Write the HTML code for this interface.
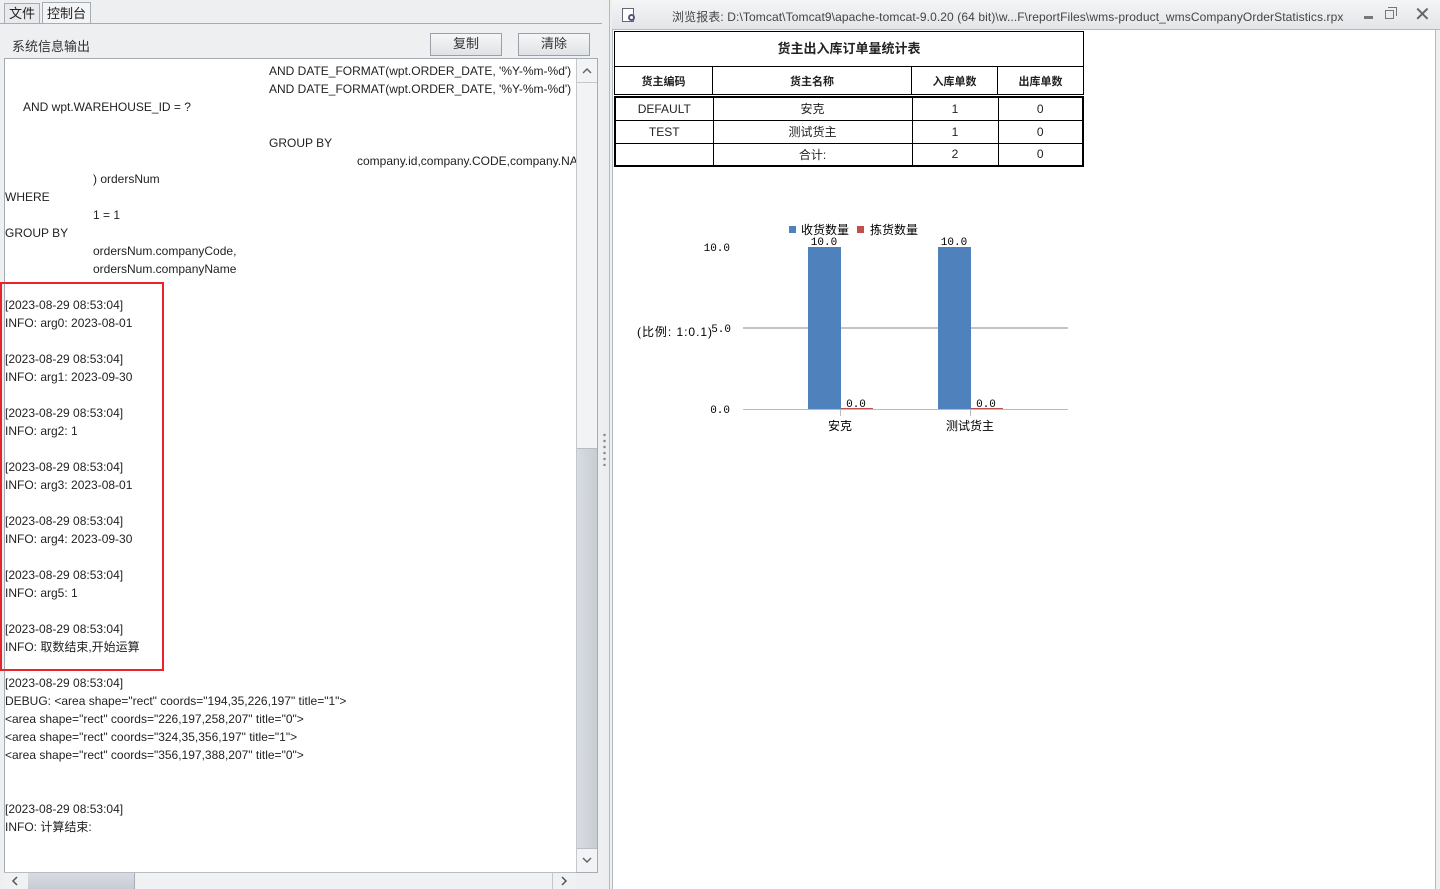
<!DOCTYPE html>
<html><head><meta charset="utf-8"><style>
*{margin:0;padding:0;box-sizing:border-box}
body{width:1440px;height:889px;background:#eeeff1;font-family:"Liberation Sans","Noto Sans CJK SC",sans-serif;font-size:12px;color:#222;position:relative;overflow:hidden}
.a{position:absolute;white-space:nowrap}
.ln{position:absolute;white-space:nowrap;line-height:18px;font-size:12px;color:#222;margin-top:1px}
.btn{position:absolute;border:1px solid #9aa0a8;background:linear-gradient(#f6f7f8,#dfe2e6);text-align:center;font-size:13px;line-height:20px;color:#333}
table{border-collapse:collapse}
</style></head><body>
<div class="a" style="left:4px;top:3px;width:36px;height:21px;border:1px solid #a6acb3;border-bottom:none;background:#e8eaed;font-size:13px;line-height:20px;text-align:center">文件</div>
<div class="a" style="left:42px;top:2px;width:49px;height:22px;border:1px solid #a6acb3;border-bottom:none;background:#f3f4f6;font-size:13px;line-height:21px;text-align:center">控制台</div>
<div class="a" style="left:0;top:23px;width:602px;height:1px;background:#a6acb3"></div>
<div class="a" style="left:12px;top:36px;font-size:13px;color:#333">系统信息输出</div>
<div class="btn" style="left:430px;top:33px;width:72px;height:23px">复制</div>
<div class="btn" style="left:518px;top:33px;width:72px;height:23px">清除</div>
<div class="a" style="left:4px;top:58px;width:594px;height:815px;background:#fff;border:1px solid #a6acb3"></div>
<div class="ln" style="left:269px;top:61px">AND DATE_FORMAT(wpt.ORDER_DATE, '%Y-%m-%d')</div>
<div class="ln" style="left:269px;top:79px">AND DATE_FORMAT(wpt.ORDER_DATE, '%Y-%m-%d')</div>
<div class="ln" style="left:23px;top:97px">AND wpt.WAREHOUSE_ID = ?</div>
<div class="ln" style="left:269px;top:133px">GROUP BY</div>
<div class="ln" style="left:357px;top:151px;width:219px;overflow:hidden">company.id,company.CODE,company.NAME</div>
<div class="ln" style="left:93px;top:169px">) ordersNum</div>
<div class="ln" style="left:5px;top:187px">WHERE</div>
<div class="ln" style="left:93px;top:205px">1 = 1</div>
<div class="ln" style="left:5px;top:223px">GROUP BY</div>
<div class="ln" style="left:93px;top:241px">ordersNum.companyCode,</div>
<div class="ln" style="left:93px;top:259px">ordersNum.companyName</div>
<div class="ln" style="left:5px;top:295px">[2023-08-29 08:53:04]</div>
<div class="ln" style="left:5px;top:313px">INFO: arg0: 2023-08-01</div>
<div class="ln" style="left:5px;top:349px">[2023-08-29 08:53:04]</div>
<div class="ln" style="left:5px;top:367px">INFO: arg1: 2023-09-30</div>
<div class="ln" style="left:5px;top:403px">[2023-08-29 08:53:04]</div>
<div class="ln" style="left:5px;top:421px">INFO: arg2: 1</div>
<div class="ln" style="left:5px;top:457px">[2023-08-29 08:53:04]</div>
<div class="ln" style="left:5px;top:475px">INFO: arg3: 2023-08-01</div>
<div class="ln" style="left:5px;top:511px">[2023-08-29 08:53:04]</div>
<div class="ln" style="left:5px;top:529px">INFO: arg4: 2023-09-30</div>
<div class="ln" style="left:5px;top:565px">[2023-08-29 08:53:04]</div>
<div class="ln" style="left:5px;top:583px">INFO: arg5: 1</div>
<div class="ln" style="left:5px;top:619px">[2023-08-29 08:53:04]</div>
<div class="ln" style="left:5px;top:637px">INFO: 取数结束,开始运算</div>
<div class="ln" style="left:5px;top:673px">[2023-08-29 08:53:04]</div>
<div class="ln" style="left:5px;top:691px">DEBUG: &lt;area shape="rect" coords="194,35,226,197" title="1"&gt;</div>
<div class="ln" style="left:5px;top:709px">&lt;area shape="rect" coords="226,197,258,207" title="0"&gt;</div>
<div class="ln" style="left:5px;top:727px">&lt;area shape="rect" coords="324,35,356,197" title="1"&gt;</div>
<div class="ln" style="left:5px;top:745px">&lt;area shape="rect" coords="356,197,388,207" title="0"&gt;</div>
<div class="ln" style="left:5px;top:799px">[2023-08-29 08:53:04]</div>
<div class="ln" style="left:5px;top:817px">INFO: 计算结束:</div>
<div class="a" style="left:0;top:282px;width:164px;height:389px;border:2px solid #e8232b"></div>
<div class="a" style="left:576px;top:59px;width:21px;height:813px;background:#f2f3f5;border-left:1px solid #c4c8cd"></div>
<svg class="a" style="left:577px;top:60px" width="20" height="22"><path d="M6 13 L10 9 L14 13" fill="none" stroke="#666" stroke-width="1.5"/></svg>
<div class="a" style="left:577px;top:82px;width:20px;height:1px;background:#c4c8cd"></div>
<div class="a" style="left:577px;top:448px;width:20px;height:400px;background:linear-gradient(90deg,#d8dce2,#c8ccd3);border-top:1px solid #b8bcc3"></div>
<div class="a" style="left:577px;top:848px;width:20px;height:24px;border-top:1px solid #b8bcc3"></div>
<svg class="a" style="left:577px;top:849px" width="20" height="22"><path d="M6 9 L10 13 L14 9" fill="none" stroke="#666" stroke-width="1.5"/></svg>
<div class="a" style="left:4px;top:872px;width:572px;height:17px;background:#f0f1f3;border-top:1px solid #b8bcc3"></div>
<svg class="a" style="left:8px;top:873px" width="16" height="16"><path d="M9 4 L5 8 L9 12" fill="none" stroke="#555" stroke-width="1.5"/></svg>
<div class="a" style="left:28px;top:873px;width:107px;height:16px;background:linear-gradient(#d8dce2,#c8ccd3);border-right:1px solid #aab"></div>
<div class="a" style="left:552px;top:873px;width:1px;height:16px;background:#c4c8cd"></div>
<svg class="a" style="left:556px;top:873px" width="16" height="16"><path d="M6 4 L10 8 L6 12" fill="none" stroke="#555" stroke-width="1.5"/></svg>
<div class="a" style="left:602px;top:0;width:8px;height:889px;background:#eceef0;border-right:1px solid #b5b9bf"></div>
<div class="a" style="left:603px;top:432px;width:3px;height:34px;background:radial-gradient(circle,#888 1px,transparent 1.5px) 0 0/3px 6px"></div>
<div class="a" style="left:612px;top:0;width:828px;height:30px;background:linear-gradient(#f4f5f6,#e3e5e8);border-bottom:1px solid #b5b9bf"></div>
<div class="a" style="left:622px;top:8px;width:12px;height:14px;border:1px solid #667;background:#fff"></div>
<div class="a" style="left:628px;top:14px;width:7px;height:7px;border:2px solid #557;border-radius:50%"></div>
<div class="a" style="left:672px;top:8px;font-size:12px;color:#444;letter-spacing:0.1px">浏览报表: D:\Tomcat\Tomcat9\apache-tomcat-9.0.20 (64 bit)\w...F\reportFiles\wms-product_wmsCompanyOrderStatistics.rpx</div>
<div class="a" style="left:1364px;top:16px;width:9px;height:3px;background:#777"></div>
<div class="a" style="left:1385px;top:10px;width:9px;height:9px;border:1px solid #777"></div>
<div class="a" style="left:1388px;top:7px;width:9px;height:9px;border-top:1px solid #777;border-right:1px solid #777"></div>
<div class="a" style="left:1414px;top:2px;font-size:20px;color:#666">✕</div>
<div class="a" style="left:612px;top:30px;width:824px;height:859px;background:#fff;border-left:1px solid #b5b9bf;border-right:1px solid #b5b9bf"></div>
<div class="a" style="left:614px;top:31px;width:470px;height:36px;border:1px solid #000;border-bottom:1px solid #000;text-align:center;font-weight:bold;font-size:13px;line-height:34px">货主出入库订单量统计表</div>
<table class="a" style="left:614px;top:66px;width:470px;font-size:11px;font-weight:bold;text-align:center">
<tr style="height:28px"><td style="border:1px solid #000;width:98px">货主编码</td><td style="border:1px solid #000;width:199px">货主名称</td><td style="border:1px solid #000;width:86px">入库单数</td><td style="border:1px solid #000">出库单数</td></tr></table>
<table class="a" style="left:614px;top:96px;width:470px;font-size:12px;text-align:center;border:2px solid #000">
<tr style="height:23px"><td style="border:1px solid #000;width:98px">DEFAULT</td><td style="border:1px solid #000;width:199px">安克</td><td style="border:1px solid #000;width:86px">1</td><td style="border:1px solid #000">0</td></tr>
<tr style="height:23px"><td style="border:1px solid #000">TEST</td><td style="border:1px solid #000">测试货主</td><td style="border:1px solid #000">1</td><td style="border:1px solid #000">0</td></tr>
<tr style="height:23px"><td style="border:1px solid #000"></td><td style="border:1px solid #000">合计:</td><td style="border:1px solid #000">2</td><td style="border:1px solid #000">0</td></tr></table>
<svg class="a" style="left:0;top:0" width="1440" height="889">
<line x1="743" y1="328" x2="1068" y2="328" stroke="#888" stroke-width="1"/>
<line x1="743" y1="409.5" x2="1068" y2="409.5" stroke="#bbb" stroke-width="1"/>
<line x1="840.5" y1="409" x2="840.5" y2="416" stroke="#bbb"/>
<line x1="970.5" y1="409" x2="970.5" y2="416" stroke="#bbb"/>
<rect x="808" y="247" width="33" height="162" fill="#4f81bd"/>
<rect x="938" y="247" width="33" height="162" fill="#4f81bd"/>
<rect x="841" y="408" width="32" height="1" fill="#c0504d"/>
<rect x="971" y="408" width="32" height="1" fill="#c0504d"/>
<rect x="789" y="226" width="7" height="7" fill="#4f81bd"/>
<rect x="857" y="226" width="7" height="7" fill="#c0504d"/>
<g font-family="Liberation Mono,monospace" font-size="11" fill="#000">
<text x="730" y="251" text-anchor="end">10.0</text>
<text x="730" y="413" text-anchor="end">0.0</text>
<text x="731" y="332" text-anchor="end">5.0</text>
<text x="824" y="245" text-anchor="middle">10.0</text>
<text x="954" y="245" text-anchor="middle">10.0</text>
<text x="856" y="407" text-anchor="middle">0.0</text>
<text x="986" y="407" text-anchor="middle">0.0</text>
</g>
<g font-family="Liberation Sans,Noto Sans CJK SC,sans-serif" font-size="12" fill="#000">
<text x="637" y="336" textLength="75">(比例: 1:0.1)</text>
<text x="801" y="234">收货数量</text>
<text x="870" y="234">拣货数量</text>
<text x="840" y="430" text-anchor="middle">安克</text>
<text x="970" y="430" text-anchor="middle">测试货主</text>
</g>
</svg>
</body></html>
